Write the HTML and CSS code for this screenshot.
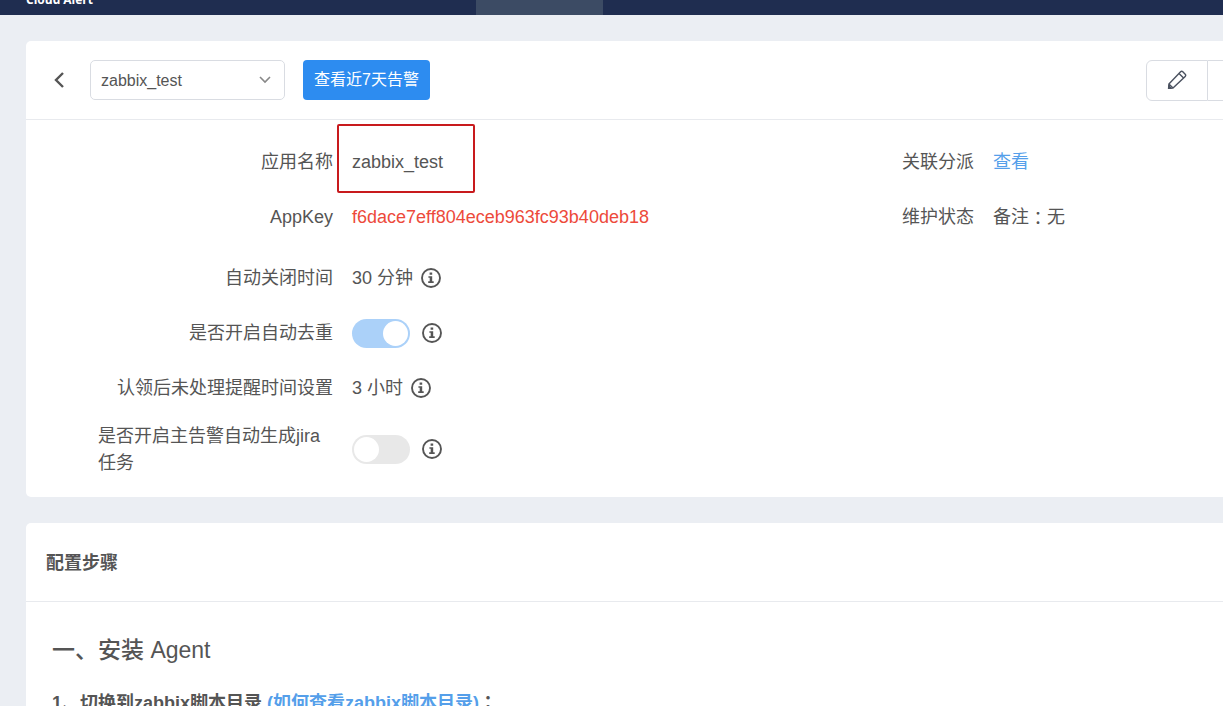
FILE: index.html
```html
<!DOCTYPE html>
<html lang="zh-CN">
<head>
<meta charset="utf-8">
<title>Cloud Alert</title>
<link rel="stylesheet" href="styles.css">
</head>
<body>
<svg class="sprite" aria-hidden="true">
  <symbol id="info" viewBox="0 0 20 20">
    <circle cx="10" cy="10" r="9" fill="none" stroke="currentColor" stroke-width="1.9"/>
    <path d="M8.6 4.6h2.6v2.2H8.6zM7.4 8.2h3.8v5.1h1.5V15H7.2v-1.7h1.5V9.8H7.4z" fill="currentColor"/>
  </symbol>
</svg>
<header class="topbar">
  <span class="brand">Cloud Alert</span>
  <span class="active-tab"></span>
</header>
<main class="page">
  <section class="card">
    <div class="toolbar">
      <button class="back" type="button" aria-label="返回">
        <svg width="12" height="18" viewBox="0 0 12 18"><path d="M10 2 3 9l7 7" fill="none" stroke="currentColor" stroke-width="2.4"/></svg>
      </button>
      <span class="select">
        <select aria-label="应用"><option>zabbix_test</option></select>
        <svg class="chevron" width="12" height="8" viewBox="0 0 12 8"><path d="M1 1l5 5 5-5" fill="none" stroke="currentColor" stroke-width="1.6"/></svg>
      </span>
      <button class="primary" type="button">查看近7天告警</button>
      <div class="actions">
        <button type="button" aria-label="编辑">
          <svg width="20" height="20" viewBox="0 0 20 20" fill="none" stroke="currentColor" stroke-width="1.4" stroke-linejoin="round"><path d="M1.6 18.4 1.9 14 13.6 1.8c.7-.7 1.5-.7 2.2 0l2.4 2.4c.7.7.7 1.5 0 2.2L6 18.1zM12 3.4 16.6 8M1.9 14 6 18.1"/><path d="m1.6 18.4.2-2.4 2.2 2.2z" fill="currentColor"/></svg>
        </button>
        <button type="button" aria-label="更多"></button>
      </div>
    </div>
    <div class="details">
      <div class="column">
        <div class="row"><span class="label">应用名称</span><span class="value marked">zabbix_test</span></div>
        <div class="row"><span class="label">AppKey</span><span class="value key">f6dace7eff804eceb963fc93b40deb18</span></div>
        <div class="row spaced"><span class="label">自动关闭时间</span><span class="value">30 分钟<svg class="info"><use href="#info"/></svg></span></div>
        <div class="row"><label class="label" for="dedupe">是否开启自动去重</label><span class="value"><input class="switch" id="dedupe" type="checkbox" role="switch" checked><svg class="info wide"><use href="#info"/></svg></span></div>
        <div class="row"><span class="label">认领后未处理提醒时间设置</span><span class="value">3 小时<svg class="info"><use href="#info"/></svg></span></div>
        <div class="row spaced"><label class="label" for="jira">是否开启主告警自动生成jira任务</label><span class="value"><input class="switch" id="jira" type="checkbox" role="switch"><svg class="info wide"><use href="#info"/></svg></span></div>
      </div>
      <div class="column">
        <div class="row"><span class="label">关联分派</span><span class="value"><a href="#">查看</a></span></div>
        <div class="row"><span class="label">维护状态</span><span class="value">备注<span class="colon" lang="zh-TW">：</span>无</span></div>
      </div>
    </div>
  </section>
  <section class="card">
    <h2 class="card-title">配置步骤</h2>
    <div class="guide">
      <h3>一、安装 Agent</h3>
      <p>1、切换到zabbix脚本目录 <a href="#">(如何查看zabbix脚本目录)</a><span class="colon" lang="zh-TW">：</span></p>
    </div>
  </section>
</main>
</body>
</html>
```
FILE: styles.css
```css
*, *::before, *::after { box-sizing: border-box; }
html { overflow: hidden; }
body {
  margin: 0;
  background: #ebeef3;
  color: #555;
  font: 18px/27px "Liberation Sans", "Noto Sans CJK SC", sans-serif;
}
a { color: #559fea; text-decoration: none; }
button, select { font: inherit; color: inherit; }
.sprite { display: none; }
.topbar {
  display: grid;
  grid-template-columns: 450px 127px 1fr;
  grid-template-rows: 15px;
  height: 15px;
  padding-left: 26px;
  overflow: hidden;
  background: #1f2d50;
}
.brand {
  align-self: end;
  padding-bottom: 6px;
  color: #fff;
  font: bold 12px/18px "Open Sans", sans-serif;
}
.active-tab { background: #3c4b64; }
.page {
  display: flex;
  flex-direction: column;
  gap: 26px;
  padding: 26px 0 0 26px;
}
.card {
  overflow: hidden;
  background: #fff;
  border-radius: 5px 0 0 5px;
}
.toolbar {
  display: flex;
  align-items: center;
  height: 79px;
  padding-left: 27px;
  border-bottom: 1px solid #e8eaee;
}
.back {
  display: flex;
  width: 37px;
  padding: 0;
  border: 0;
  background: none;
}
.select {
  position: relative;
  width: 195px;
  margin-right: 18px;
}
.select select {
  display: block;
  appearance: none;
  width: 100%;
  height: 40px;
  padding: 0 10px;
  border: 1px solid #d9dce2;
  border-radius: 5px;
  background: #fff;
  font-size: 16px;
}
.chevron {
  position: absolute;
  top: 16px;
  right: 14px;
  color: #888;
  pointer-events: none;
}
.primary {
  height: 40px;
  padding: 0 11px 2px;
  border: 0;
  border-radius: 4px;
  background: #2d8cf0;
  color: #fff;
  font-size: 16px;
}
.actions {
  display: flex;
  margin-left: auto;
  margin-right: -47px;
}
.actions button {
  display: grid;
  place-items: center;
  width: 62px;
  height: 41px;
  padding: 0;
  border: 1px solid #d9dce2;
  background: #fff;
  color: #4b5260;
}
.actions button:first-child { border-radius: 6px 0 0 6px; }
.actions button + button { border-left: 0; }
.details {
  display: grid;
  grid-template-columns: 641px 1fr;
  padding: 15px 0 20px;
}
.row {
  display: grid;
  grid-template-columns: 235px 1fr;
  align-items: center;
  column-gap: 19px;
  min-height: 55px;
  padding-left: 72px;
}
.spaced { margin-top: 6px; }
.label { justify-self: end; }
.value {
  position: relative;
  display: flex;
  align-items: center;
}
.key { color: #ed4a3b; }
.marked::after {
  content: "";
  position: absolute;
  top: -25px;
  left: -15px;
  width: 138px;
  height: 69px;
  border: 2px solid #c81a1d;
  border-radius: 2px;
}
.info {
  width: 20px;
  height: 20px;
  margin: 0 0 2px 8px;
}
.info.wide { margin-left: 12px; }
.switch {
  appearance: none;
  width: 58px;
  height: 29px;
  margin: 0;
  padding: 2px;
  border-radius: 15px;
  background: #e8e8e8;
}
.switch::before {
  content: "";
  display: block;
  width: 25px;
  height: 25px;
  border-radius: 50%;
  background: #fff;
}
.switch:checked { background: #abd1f9; }
.switch:checked::before { margin-left: auto; }
.colon { font-family: "Noto Sans CJK TC", sans-serif; }
.card-title {
  margin: 0;
  padding: 27px 20px 24px;
  border-bottom: 1px solid #e8eaee;
  font-size: 18px;
}
.guide { padding: 32px 26px; }
.guide h3 {
  margin: 0;
  font-size: 23px;
  font-weight: 500;
  line-height: 32px;
}
.guide p {
  margin: 22px 0 0;
  font-weight: bold;
}
```
